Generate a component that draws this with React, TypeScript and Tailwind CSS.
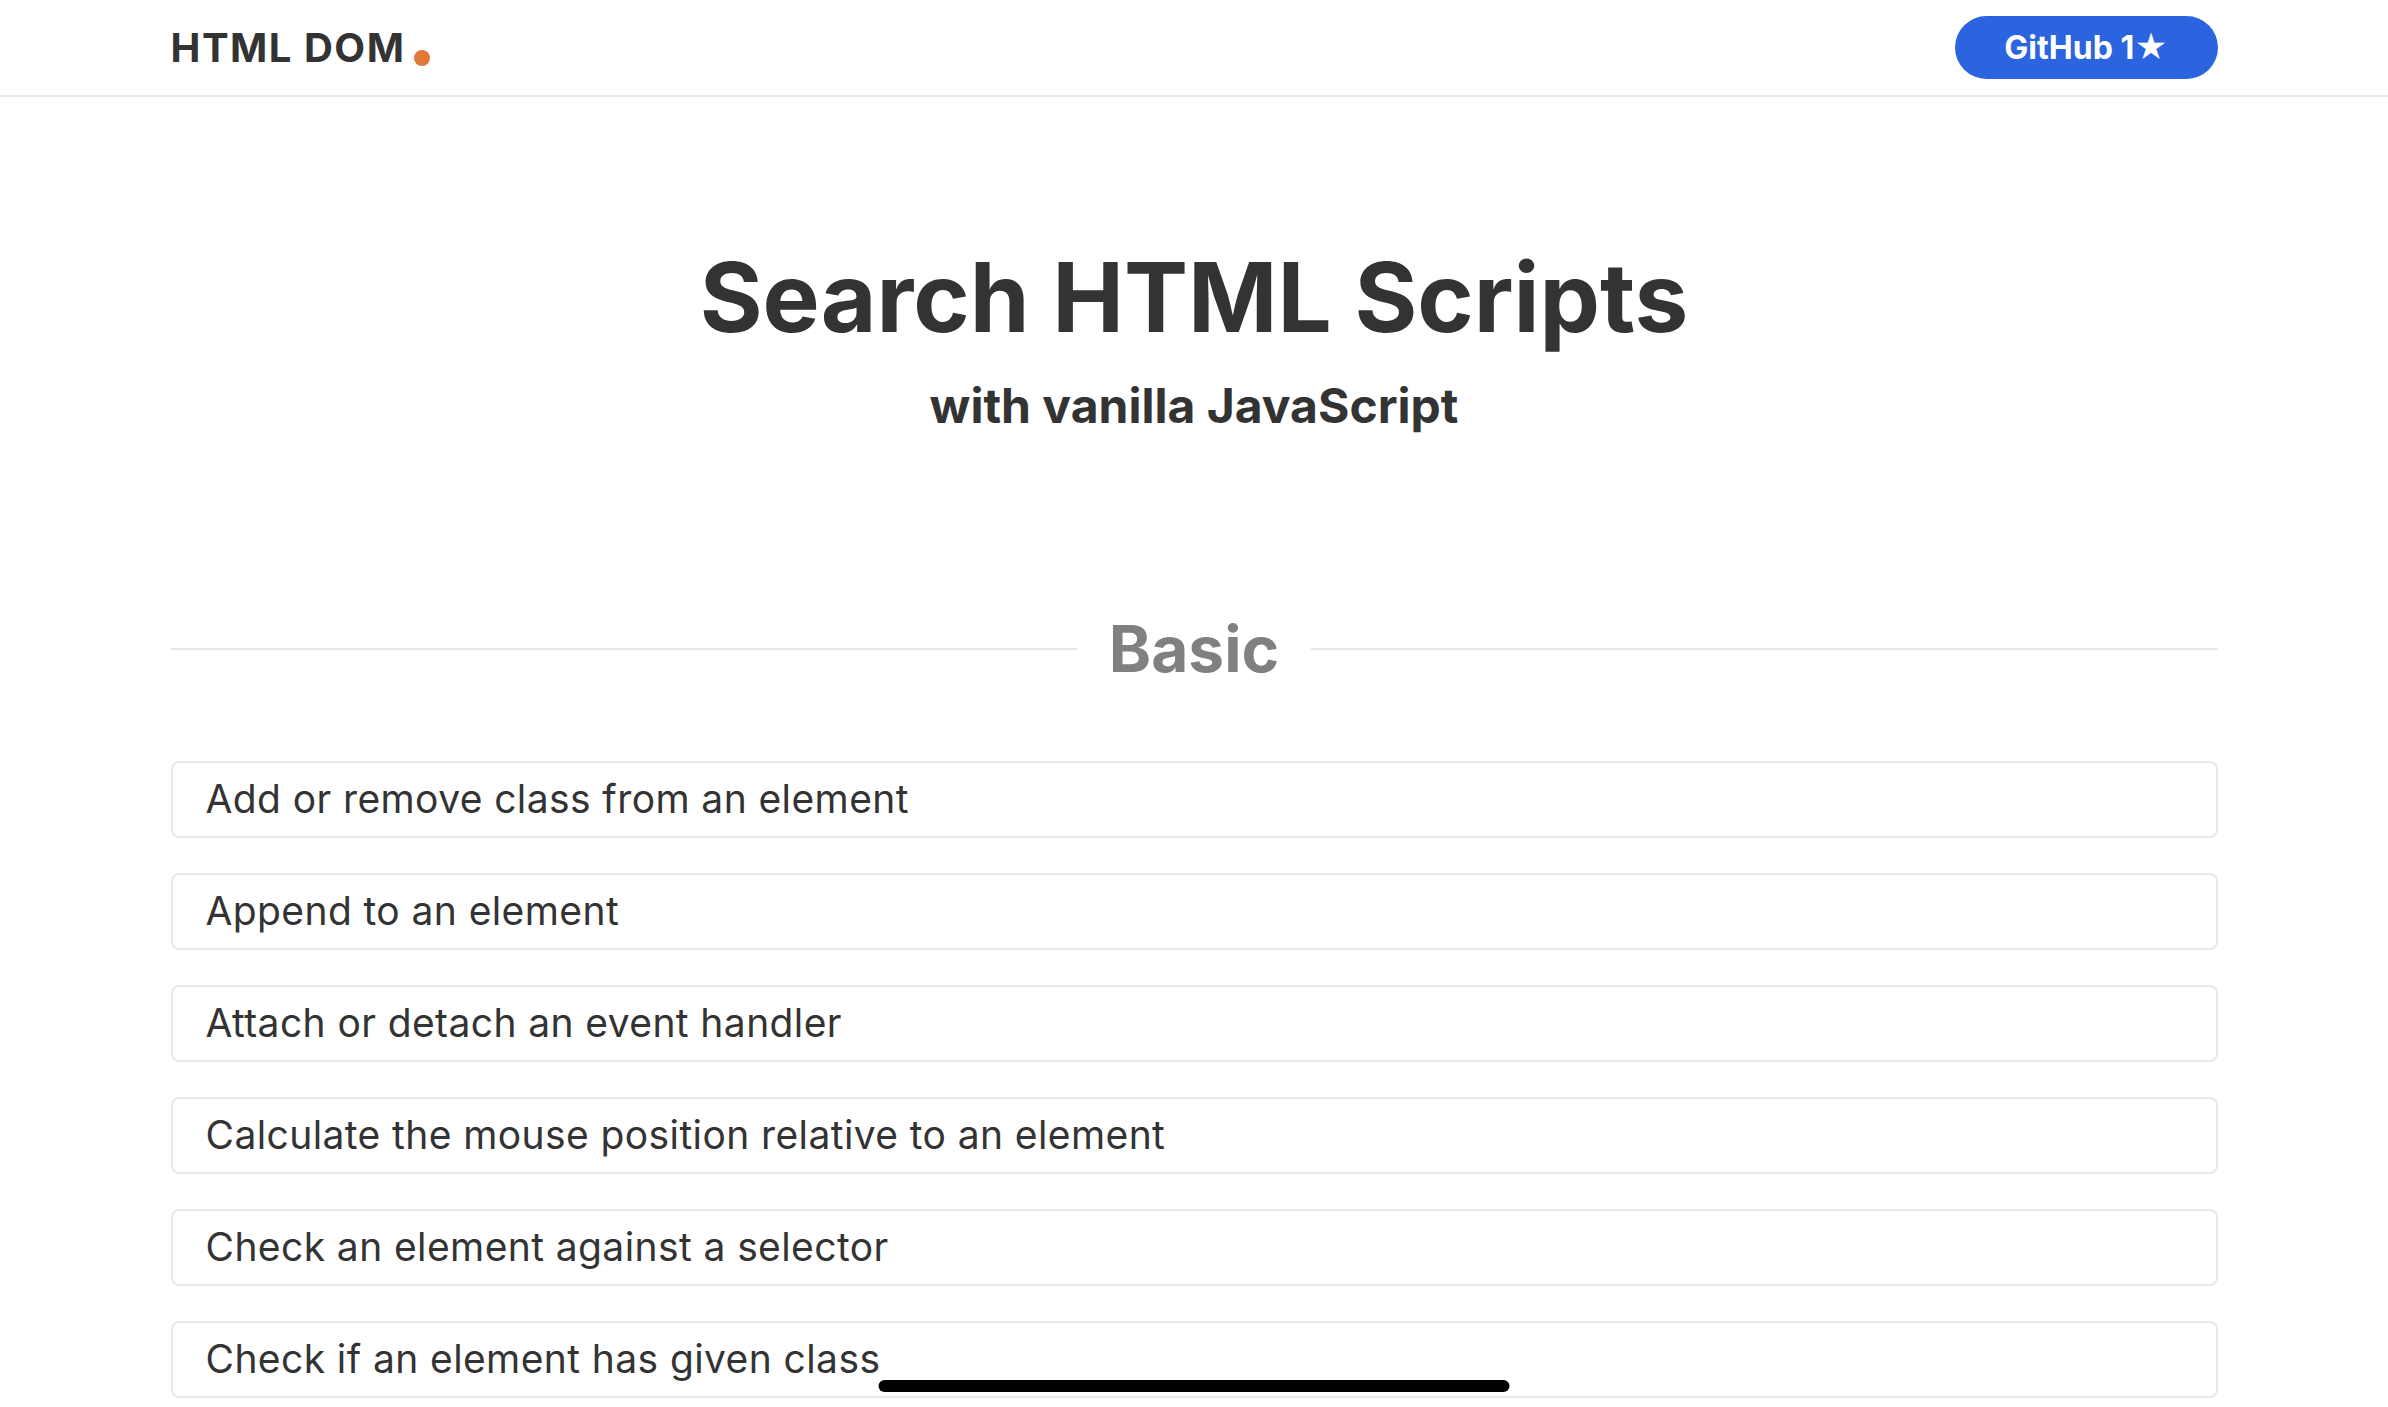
const basics = [
  "Add or remove class from an element",
  "Append to an element",
  "Attach or detach an event handler",
  "Calculate the mouse position relative to an element",
  "Check an element against a selector",
  "Check if an element has given class",
  "Check if an element is a descendant of another",
  "Check if an element is visible in a container",
  "Check if the code is running in the browser",
  "Clone an element",
];

export default function App() {
  return (
    <div className="min-h-screen bg-white font-[Inter,sans-serif] text-[#333333]">
      {/* Header */}
      <header className="border-b-2 border-[#e8e8e8]">
        <div className="mx-auto flex h-[95px] w-[2047px] items-center justify-between">
          <a href="#" className="flex items-end gap-[9px]">
            <span className="text-[40px] leading-none font-bold tracking-[1.5px]">HTML DOM</span>
            <span className="mb-[2px] h-4 w-4 rounded-full bg-[#e2773a]" />
          </a>
          <a
            href="#"
            className="flex h-[63px] w-[263px] items-center justify-center rounded-full bg-[#2c64e0] text-[32px] font-bold text-white"
          >
            GitHub 1★
          </a>
        </div>
      </header>

      {/* Hero */}
      <div className="pt-[152px] text-center">
        <h1 className="text-[96px] leading-none font-bold">Search HTML Scripts</h1>
        <p className="mt-[37px] text-[48px] leading-none font-bold">with vanilla JavaScript</p>
      </div>

      {/* Section */}
      <section className="mx-auto mt-[187px] w-[2047px]">
        <div className="flex items-center gap-8">
          <div className="h-[2px] flex-1 bg-[#e8e8e8]" />
          <h2 className="text-[64px] leading-none font-bold text-[#808080]">Basic</h2>
          <div className="h-[2px] flex-1 bg-[#e8e8e8]" />
        </div>
        <ul className="mt-[80px] flex flex-col gap-[35px] pb-10">
          {basics.map((item) => (
            <li key={item}>
              <a
                href="#"
                className="flex h-[77px] items-center rounded-lg border-2 border-[#e8e8e8] px-[33px] text-[39px] tracking-[0.4px]"
              >
                {item}
              </a>
            </li>
          ))}
        </ul>
      </section>

      {/* Home indicator */}
      <div className="fixed bottom-[15px] left-1/2 h-3 w-[631px] -translate-x-1/2 rounded-full bg-black" />
    </div>
  );
}
